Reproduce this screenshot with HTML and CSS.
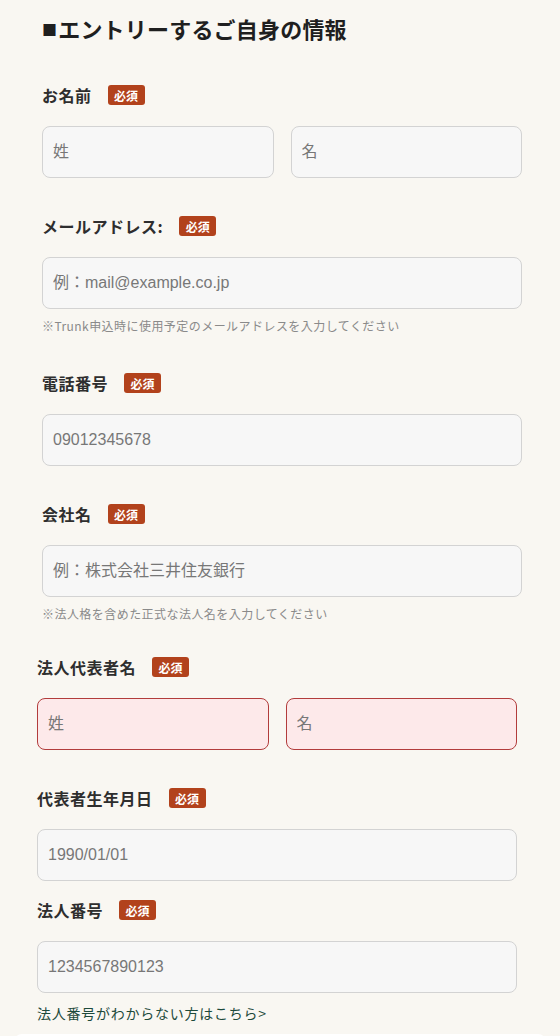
FILE: index.html
```html
<!DOCTYPE html>
<html lang="ja">
<head>
<meta charset="utf-8">
<title>エントリー</title>
<link rel="stylesheet" href="styles.css">
</head>
<body>
<div class="page">
  <section class="sec sec-a">
    <h2 class="title"><span class="sq">■</span>エントリーするご自身の情報</h2>

    <div class="field">
      <div class="label-row"><span class="label">お名前</span><span class="badge">必須</span></div>
      <div class="pair">
        <input class="inp" type="text" placeholder="姓">
        <input class="inp" type="text" placeholder="名">
      </div>
    </div>

    <div class="field">
      <div class="label-row"><span class="label">メールアドレス:</span><span class="badge">必須</span></div>
      <input class="inp" type="text" placeholder="例：mail@example.co.jp">
      <p class="note">※Trunk申込時に使用予定のメールアドレスを入力してください</p>
    </div>

    <div class="field">
      <div class="label-row"><span class="label">電話番号</span><span class="badge">必須</span></div>
      <input class="inp" type="text" placeholder="09012345678">
    </div>

    <div class="field last">
      <div class="label-row"><span class="label">会社名</span><span class="badge">必須</span></div>
      <input class="inp" type="text" placeholder="例：株式会社三井住友銀行">
      <p class="note">※法人格を含めた正式な法人名を入力してください</p>
    </div>
  </section>

  <section class="sec sec-b">
    <div class="field">
      <div class="label-row"><span class="label">法人代表者名</span><span class="badge">必須</span></div>
      <div class="pair">
        <input class="inp err" type="text" placeholder="姓">
        <input class="inp err" type="text" placeholder="名">
      </div>
    </div>

    <div class="field tight">
      <div class="label-row"><span class="label">代表者生年月日</span><span class="badge">必須</span></div>
      <input class="inp" type="text" placeholder="1990/01/01">
    </div>

    <div class="field last">
      <div class="label-row"><span class="label">法人番号</span><span class="badge">必須</span></div>
      <input class="inp" type="text" placeholder="1234567890123">
      <a class="link" href="#">法人番号がわからない方はこちら&gt;</a>
    </div>
  </section>

  <div class="next-card"></div>
</div>
</body>
</html>
```

FILE: styles.css
```css
html, body {
  margin: 0;
  padding: 0;
  background: #f9f7f2;
}

body {
  font-family: "Noto Sans CJK JP", "Noto Sans", sans-serif;
  color: #2b2b2b;
}

.page {
  display: flex;
  flex-direction: column;
}

.sec-a {
  padding: 12px 38px 0 42px;
}

.sec-b {
  padding: 32px 43px 0 37px;
}

.title {
  display: flex;
  align-items: center;
  height: 32px;
  margin: 0 0 39px 0;
  font-size: 22px;
  line-height: 32px;
  font-weight: 700;
  letter-spacing: 0.2px;
  color: #1f1f1f;
}

.sq {
  font-size: 15px;
  line-height: 1;
  margin-right: 1px;
  padding-top: 3px;
}

.field {
  display: flex;
  flex-direction: column;
  margin-bottom: 36px;
}

.field.tight {
  margin-bottom: 17px;
}

.field.last {
  margin-bottom: 0;
}

.label-row {
  display: flex;
  align-items: center;
  height: 24px;
  margin-bottom: 19px;
}

.label {
  font-size: 16px;
  font-weight: 700;
  line-height: 24px;
  letter-spacing: 0.5px;
  color: #2e2e2e;
}

.badge {
  margin-left: 16px;
  display: inline-flex;
  align-items: center;
  justify-content: center;
  width: 37px;
  height: 20px;
  border-radius: 3px;
  background: #b2421c;
  color: #fff;
  font-size: 12px;
  font-weight: 700;
}

.pair {
  display: grid;
  grid-template-columns: 1fr 1fr;
  column-gap: 17px;
}

.inp {
  box-sizing: border-box;
  width: 100%;
  height: 52px;
  margin: 0;
  padding: 0 10px;
  border: 1px solid #d3d3d3;
  border-radius: 8px;
  background: #f7f7f7;
  font-family: "Liberation Sans", "Noto Sans CJK JP", sans-serif;
  font-size: 16px;
  color: #333;
  outline: none;
}

.inp::placeholder {
  color: #777777;
}

.inp.err {
  background: #fde9ea;
  border-color: #b23c3c;
}

.note {
  margin: 8px 0 0 0;
  font-size: 12px;
  line-height: 18px;
  letter-spacing: 0.45px;
  color: #8a8a8a;
  font-family: "Noto Sans CJK JP", sans-serif;
}

.link {
  margin-top: 10px;
  font-size: 14px;
  line-height: 20px;
  letter-spacing: 0.75px;
  color: #1d4a3b;
  text-decoration: none;
}

.next-card {
  margin: 11px 14px 0 14px;
  height: 40px;
  background: #ffffff;
  border-radius: 8px 8px 0 0;
}
```
